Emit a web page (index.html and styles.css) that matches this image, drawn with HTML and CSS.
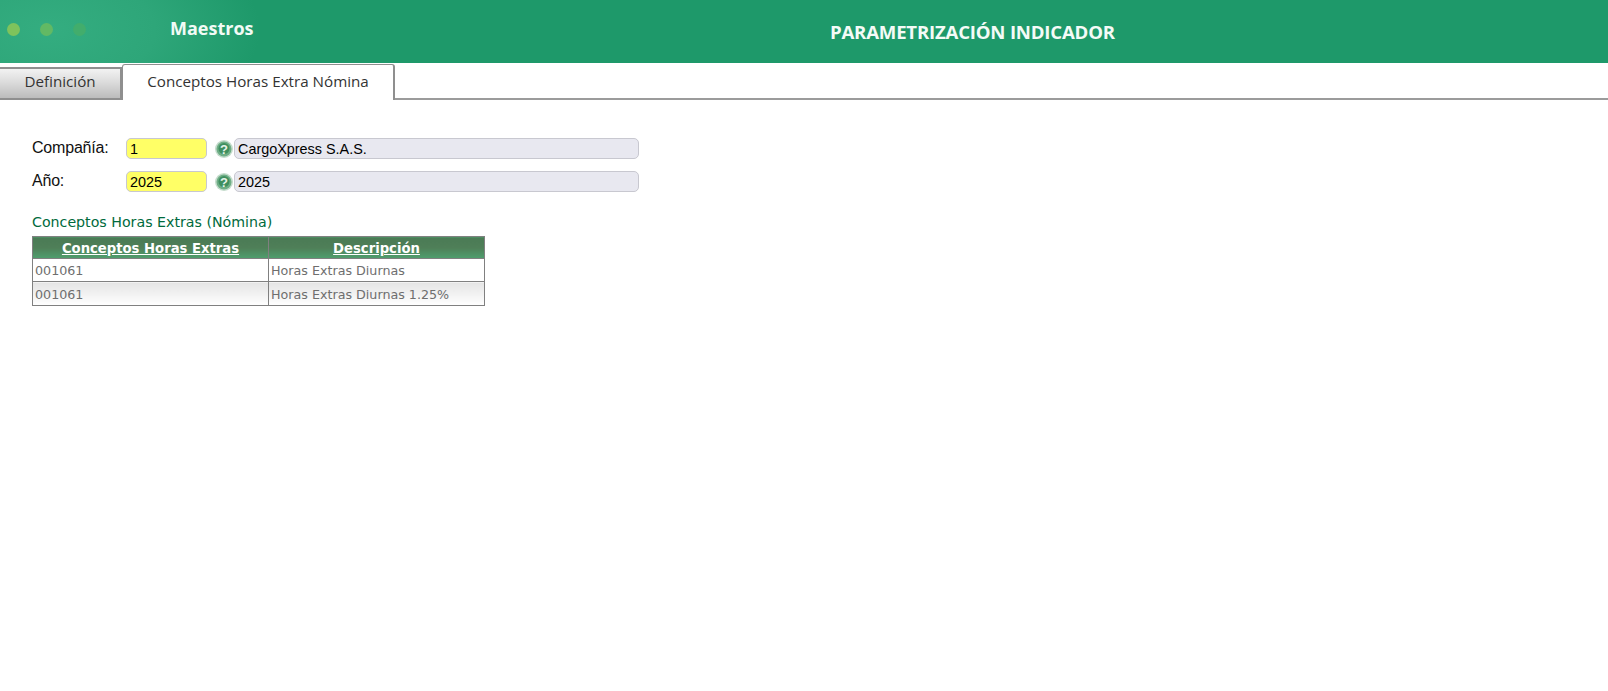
FILE: index.html
```html
<!DOCTYPE html>
<html lang="es">
<head>
  <meta charset="UTF-8" />
  <title>Parametrización Indicador</title>
  <link rel="stylesheet" href="styles.css">
</head>
<body>
  <header class="topbar">
    <div class="brand">
      <div class="dots">
        <span class="dot dot-1"></span>
        <span class="dot dot-2"></span>
        <span class="dot dot-3"></span>
      </div>
      <div class="module">Maestros</div>
    </div>
    <h1 class="page-title">PARAMETRIZACIÓN INDICADOR</h1>
  </header>

  <nav class="tabs">
    <div class="tab">Definición</div>
    <div class="tab active">Conceptos Horas Extra Nómina</div>
  </nav>

  <main class="content">
    <div class="field-row">
      <label class="field-label">Compañía:</label>
      <input class="code-input" type="text" value="1">
      <svg class="help-icon" viewBox="0 0 18 18">
        <circle cx="9" cy="9" r="9" fill="#c4dccc"/>
        <circle cx="9" cy="9" r="7.5" fill="#6fae86"/>
        <circle cx="9" cy="8.5" r="5.5" fill="#3f8f5f"/>
        <text x="9" y="13.5" text-anchor="middle" class="help-mark">?</text>
      </svg>
      <input class="desc-input" type="text" value="CargoXpress S.A.S." readonly>
    </div>
    <div class="field-row">
      <label class="field-label">Año:</label>
      <input class="code-input" type="text" value="2025">
      <svg class="help-icon" viewBox="0 0 18 18">
        <circle cx="9" cy="9" r="9" fill="#c4dccc"/>
        <circle cx="9" cy="9" r="7.5" fill="#6fae86"/>
        <circle cx="9" cy="8.5" r="5.5" fill="#3f8f5f"/>
        <text x="9" y="13.5" text-anchor="middle" class="help-mark">?</text>
      </svg>
      <input class="desc-input" type="text" value="2025" readonly>
    </div>

    <div class="section-title">Conceptos Horas Extras (Nómina)</div>
    <table class="grid">
      <thead>
        <tr>
          <th class="col-code"><a href="#">Conceptos Horas Extras</a></th>
          <th class="col-desc"><a href="#">Descripción</a></th>
        </tr>
      </thead>
      <tbody>
        <tr>
          <td>001061</td>
          <td>Horas Extras Diurnas</td>
        </tr>
        <tr class="alt">
          <td>001061</td>
          <td>Horas Extras Diurnas 1.25%</td>
        </tr>
      </tbody>
    </table>
  </main>
</body>
</html>
```

FILE: styles.css
```css
body {
  margin: 0;
  background: white;
  font-family: 'Open Sans', sans-serif;
}

.topbar {
  height: 63px;
  background: #1e996a;
  display: flex;
  align-items: center;
  position: relative;
}

.brand {
  width: 420px;
  height: 63px;
  display: flex;
  align-items: center;
  background: radial-gradient(ellipse 210px 110px at 50px 30px, #34ad80 0%, #2ea679 50%, #1e996a 100%);
}

.dots {
  display: flex;
  gap: 20px;
  margin-left: 7px;
  width: 163px;
  margin-top: -4px;
}

.dot {
  width: 13px;
  height: 13px;
  border-radius: 50%;
}

.dot-1 { background: #7fc35c; }
.dot-2 { background: #62b964; }
.dot-3 { background: #42ad6c; }

.module {
  color: #f2fbf6;
  font-size: 18px;
  font-weight: 700;
  margin-top: -8px;
}

.page-title {
  position: absolute;
  left: 830px;
  top: 18px;
  margin: 0;
  color: #f4fbf7;
  font-size: 18.6px;
  font-weight: 700;
  letter-spacing: -0.2px;
  line-height: 28px;
  white-space: nowrap;
}

.tabs {
  height: 35px;
  display: flex;
  align-items: flex-end;
  border-bottom: 2px solid #9b9b9b;
}

.tab {
  box-sizing: border-box;
  width: 122px;
  height: 33px;
  margin-bottom: -2px;
  border: 2px solid #8f8f8f;
  border-left: none;
  background: linear-gradient(#f2f2f2 0%, #dcdcdc 45%, #bcbcbc 100%);
  color: #333;
  font-size: 15.2px;
  line-height: 25px;
  text-align: center;
}

.tab.active {
  width: 273px;
  height: 36px;
  border: 1px solid #8f8f8f;
  border-right-width: 2px;
  border-bottom: none;
  border-radius: 3px 3px 0 0;
  background: white;
  line-height: 32px;
  position: relative;
}

.content {
  padding: 38px 0 0 32px;
}

.field-row {
  display: flex;
  align-items: center;
  height: 21px;
  margin-bottom: 12px;
}

.field-label {
  width: 94px;
  font-family: 'Liberation Sans', sans-serif;
  font-size: 16px;
  letter-spacing: -0.2px;
  color: #111;
  margin-top: -2px;
}

input {
  box-sizing: border-box;
  height: 21px;
  padding: 1px 3px 0;
  border: 1px solid #c8c8d0;
  border-radius: 5px;
  font-family: 'Liberation Sans', sans-serif;
  font-size: 14.4px;
  color: #000;
}

.code-input {
  width: 81px;
  background: #ffff66;
}

.desc-input {
  width: 405px;
  background: #e8e8f0;
}

.help-icon {
  width: 18px;
  height: 18px;
  margin: 0 1px 0 8px;
}

.help-mark {
  fill: #e6f2ea;
  font-family: 'Liberation Sans', sans-serif;
  font-size: 13px;
  font-weight: 700;
}

.section-title {
  margin-top: 21px;
  font-family: 'DejaVu Sans', sans-serif;
  font-size: 14.2px;
  line-height: 18px;
  color: #006a3c;
}

.grid {
  margin-top: 5px;
  width: 453px;
  border-collapse: collapse;
  font-family: 'DejaVu Sans', sans-serif;
  font-size: 12.7px;
  table-layout: fixed;
}

.grid th, .grid td {
  border: 1px solid #808080;
  padding: 1px 2px 0;
}

.grid th {
  height: 20px;
  padding: 1px 0 0;
  background: linear-gradient(#4a7a55 0%, #4f7f58 50%, #4f9f6e 100%);
  font-size: 13.2px;
  text-align: center;
}

.grid th a {
  color: white;
  font-weight: 700;
}

.col-code { width: 235px; }

.grid td {
  height: 21px;
  color: #6e6e6e;
}

.grid tr.alt td {
  height: 22px;
  background: linear-gradient(#e4e4e4 0%, #ffffff 100%);
}
```
